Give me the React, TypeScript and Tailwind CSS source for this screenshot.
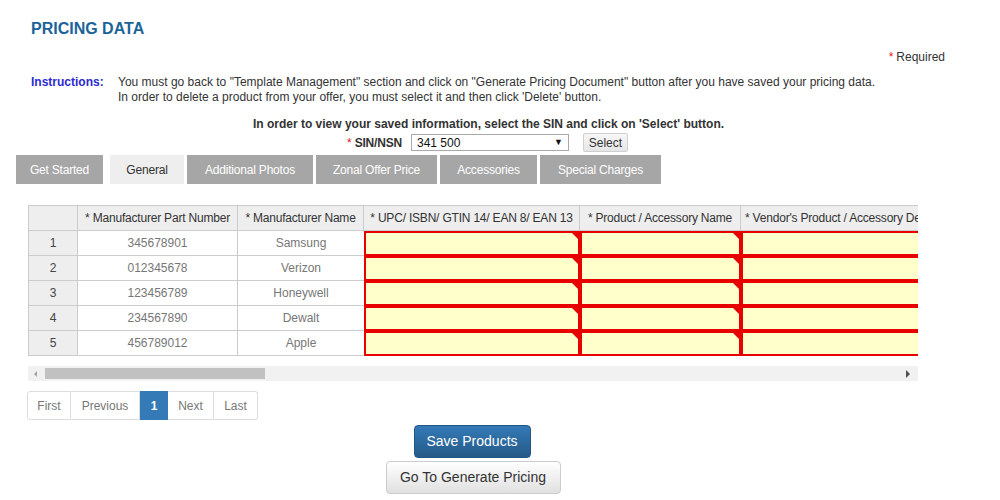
import React from "react";

const rows = [
  { n: 1, part: "345678901", name: "Samsung" },
  { n: 2, part: "012345678", name: "Verizon" },
  { n: 3, part: "123456789", name: "Honeywell" },
  { n: 4, part: "234567890", name: "Dewalt" },
  { n: 5, part: "456789012", name: "Apple" },
];

const tabs = [
  { label: "Get Started", w: "w-[87px]", ml: "ml-0" },
  { label: "General", w: "w-[74px]", ml: "ml-[7px]", active: true },
  { label: "Additional Photos", w: "w-[126px]", ml: "ml-[3px]" },
  { label: "Zonal Offer Price", w: "w-[121px]", ml: "ml-[3px]" },
  { label: "Accessories", w: "w-[97px]", ml: "ml-[3px]" },
  { label: "Special Charges", w: "w-[121px]", ml: "ml-[3px]" },
];

const RedCell = ({ w, flag }: { w: string; flag?: boolean }) => (
  <div className={`${w} shrink-0 h-full relative bg-[#ffffcc] border-2 border-[#e60000]`}>
    {flag && (
      <div className="absolute top-0 right-0 w-0 h-0 border-l-[6px] border-l-transparent border-t-[6px] border-t-[#e60000]" />
    )}
  </div>
);

const App = () => {
  return (
    <div className="w-[1000px] h-[500px] bg-white overflow-hidden font-['Liberation_Sans',Arial,sans-serif] text-[12px] text-[#333]">
      <h1 className="pt-[20px] pl-[31px] text-[16px] leading-[18px] font-bold text-[#1c6399]">
        PRICING DATA
      </h1>

      <div className="mt-[12px] pr-[55px] flex justify-end leading-[15px]">
        <span className="text-[#e02020] mr-[3px]">*</span>
        <span>Required</span>
      </div>

      <div className="mt-[10px] pl-[31px] flex leading-[15px]">
        <div className="w-[87px] shrink-0 font-bold text-[#2b2bd0]">Instructions:</div>
        <div>
          <p>
            You must go back to "Template Management" section and click on "Generate Pricing Document" button after you have saved your pricing data.
          </p>
          <p>In order to delete a product from your offer, you must select it and then click 'Delete' button.</p>
        </div>
      </div>

      <p className="mt-[12px] w-[977px] text-center font-bold leading-[15px]">
        In order to view your saved information, select the SIN and click on 'Select' button.
      </p>

      <div className="mt-[1px] flex items-center pl-[347px] h-[19px]">
        <span className="text-[#e02020] mr-[3px]">*</span>
        <span className="font-bold tracking-[-0.2px]">SIN/NSN</span>
        <div className="ml-[9px] w-[158px] h-[17px] border border-[#a9a9a9] flex items-center justify-between px-[5px] text-[12px] text-[#111]">
          <span>341 500</span>
          <span className="text-[9px]">▼</span>
        </div>
        <button className="ml-[14px] w-[45px] h-[19px] border border-[#cfcfcf] rounded-[2px] bg-gradient-to-b from-[#f7f7f7] to-[#e6e6e6] text-[12px] text-[#333]">
          Select
        </button>
      </div>

      <div className="mt-[3px] pl-[16px] flex h-[29px]">
        {tabs.map((t) => (
          <div
            key={t.label}
            className={`${t.w} ${t.ml} h-full flex items-center justify-center text-[12px] tracking-[-0.2px] ${
              t.active ? "bg-[#eeeeee] text-[#333]" : "bg-[#a6a6a6] text-white"
            }`}
          >
            {t.label}
          </div>
        ))}
      </div>

      <div className="mt-[21px] ml-[28px] w-[890px] overflow-hidden">
        <div className="w-[1100px]">
          <div className="flex h-[26px] bg-[#eeeeee] border-t border-[#cccccc]">
            <div className="w-[50px] shrink-0 border-l border-r border-b border-[#cccccc]" />
            {[
              { t: "* Manufacturer Part Number", w: "w-[160px]", a: "justify-center" },
              { t: "* Manufacturer Name", w: "w-[126px]", a: "justify-center" },
              { t: "* UPC/ ISBN/ GTIN 14/ EAN 8/ EAN 13", w: "w-[216px]", a: "justify-center" },
              { t: "* Product / Accessory Name", w: "w-[161px]", a: "justify-center" },
              { t: "* Vendor's Product / Accessory Description", w: "w-[260px]", a: "justify-start pl-[4px]" },
            ].map((h) => (
              <div
                key={h.t}
                className={`${h.w} ${h.a} shrink-0 border-r border-b border-[#cccccc] flex items-center whitespace-nowrap overflow-hidden tracking-[-0.2px] text-[#333]`}
              >
                {h.t}
              </div>
            ))}
          </div>
          {rows.map((r) => (
            <div key={r.n} className="flex h-[25px]">
              <div className="w-[50px] shrink-0 bg-[#eeeeee] border-l border-r border-b border-[#cccccc] flex items-center justify-center text-[#444]">
                {r.n}
              </div>
              <div className="w-[160px] shrink-0 border-r border-b border-[#cccccc] flex items-center justify-center text-[#777]">
                {r.part}
              </div>
              <div className="w-[126px] shrink-0 border-b border-[#cccccc] flex items-center justify-center text-[#777]">
                {r.name}
              </div>
              <RedCell w="w-[216px]" flag />
              <RedCell w="w-[161px]" flag />
              <RedCell w="w-[260px]" />
            </div>
          ))}
        </div>
      </div>

      <div className="mt-[10px] ml-[28px] w-[890px] h-[15px] bg-[#f1f1f1] flex items-center relative">
        <div className="ml-[6px] w-0 h-0 border-y-[3px] border-y-transparent border-r-[3px] border-r-[#a3a3a3]" />
        <div className="ml-[8px] w-[220px] h-[11px] bg-[#c1c1c1]" />
        <div className="absolute right-[8px] w-0 h-0 border-y-[4px] border-y-transparent border-l-[4px] border-l-[#505050]" />
      </div>

      <div className="mt-[10px] ml-[27px] flex h-[29px] text-[12px]">
        <div className="w-[44px] flex items-center justify-center border border-[#dddddd] rounded-l-[3px] text-[#777]">First</div>
        <div className="w-[69px] flex items-center justify-center border border-l-0 border-[#dddddd] text-[#777]">Previous</div>
        <div className="w-[28px] flex items-center justify-center bg-[#337ab7] border border-[#337ab7] text-white font-bold">1</div>
        <div className="w-[46px] flex items-center justify-center border border-l-0 border-[#dddddd] text-[#777]">Next</div>
        <div className="w-[44px] flex items-center justify-center border border-l-0 border-[#dddddd] rounded-r-[3px] text-[#777]">Last</div>
      </div>

      <div className="mt-[5px] w-[946px] flex flex-col items-center gap-[3px]">
        <button className="ml-[-2px] w-[117px] h-[33px] rounded-[4px] border border-[#245580] bg-gradient-to-b from-[#337ab7] to-[#265a88] text-white text-[14px]">
          Save Products
        </button>
        <button className="w-[175px] h-[33px] rounded-[4px] border border-[#cccccc] bg-gradient-to-b from-white to-[#e0e0e0] text-[#333] text-[14px]">
          Go To Generate Pricing
        </button>
      </div>
    </div>
  );
};

export default App;
